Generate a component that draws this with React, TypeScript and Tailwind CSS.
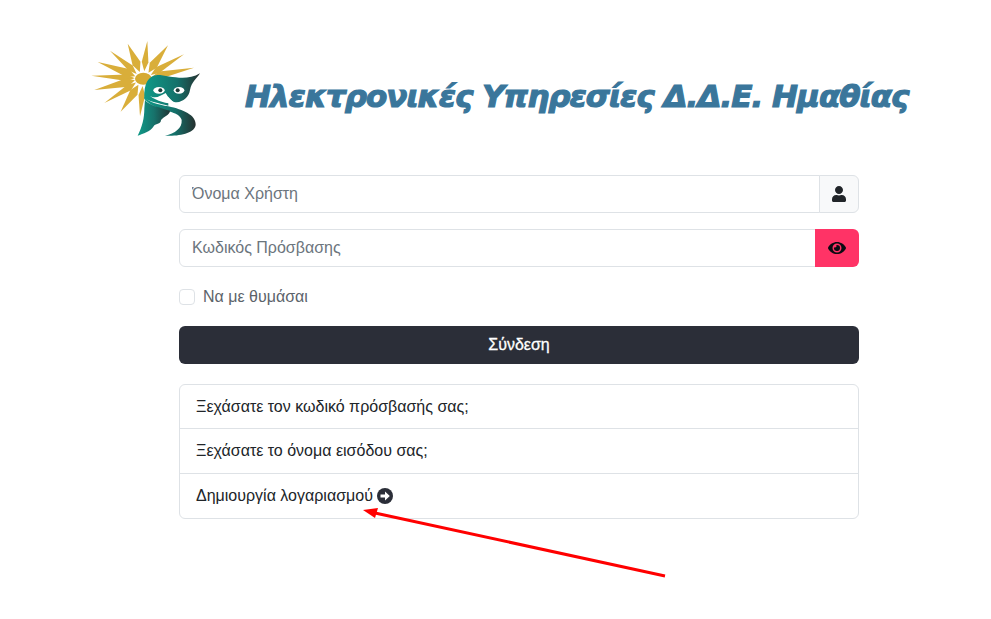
import { FaEye, FaUser } from 'react-icons/fa';

const rays = [
  { tip: [202, 33], w: 10 },
  { tip: [143, 41], w: 13 },
  { tip: [90, 62], w: 10 },
  { tip: [53, 96], w: 13 },
  { tip: [34, 137], w: 10 },
  { tip: [43, 180], w: 13 },
  { tip: [73, 219], w: 10 },
  { tip: [122, 245], w: 13 },
  { tip: [180, 259], w: 10 },
  { tip: [264, 46], w: 13 },
  { tip: [312, 73], w: 10 },
  { tip: [342, 113], w: 11 },
];

const Logo = () => (
  <svg viewBox="0 0 420 345" className="w-[140px] h-[115px] shrink-0">
    <defs>
      <linearGradient id="owl" x1="0" y1="0" x2="1" y2="0">
        <stop offset="0" stopColor="#0f9a88" />
        <stop offset="0.6" stopColor="#14706a" />
        <stop offset="1" stopColor="#26302f" />
      </linearGradient>
      <linearGradient id="wing" x1="0" y1="0" x2="1" y2="0">
        <stop offset="0" stopColor="#0f9a88" />
        <stop offset="0.5" stopColor="#17736c" />
        <stop offset="1" stopColor="#1f3635" />
      </linearGradient>
    </defs>
    {rays.map(({ tip, w }) => {
      const cx = 190;
      const cy = 146;
      const dx = tip[0] - cx;
      const dy = tip[1] - cy;
      const len = Math.hypot(dx, dy);
      const ux = dx / len;
      const uy = dy / len;
      const innerX = cx + ux * 26;
      const innerY = cy + uy * 22;
      const midX = cx + ux * 50;
      const midY = cy + uy * 50;
      return (
        <polygon
          key={tip.join()}
          points={`${tip[0]},${tip[1]} ${midX - uy * w},${midY + ux * w} ${innerX},${innerY} ${midX + uy * w},${midY - ux * w}`}
          fill="#d9ae3a"
        />
      );
    })}
    <ellipse cx="190" cy="146" rx="25" ry="18" fill="#d6aa32" />
    <g transform="translate(165 105)">
      <path
        d="M28 100C26 55 40 32 68 30C100 30 150 52 195 25C185 42 170 50 165 75C162 95 145 110 125 112C115 112 104 104 100 95L100 122C70 115 45 110 28 100Z"
        fill="url(#owl)"
      />
      <ellipse cx="72" cy="76" rx="17" ry="10" fill="#fff" />
      <path d="M44 92C62 104 76 92 92 84C98 96 110 108 122 116C94 116 66 108 44 92Z" fill="#fff" />
      <ellipse cx="132" cy="76" rx="16" ry="10" fill="#fff" />
      <circle cx="76" cy="76" r="6" fill="#1f3b3a" />
      <circle cx="128" cy="76" r="6" fill="#1f3b3a" />
      <path
        d="M28 95C40 112 70 118 100 124C145 134 182 150 182 178C182 205 130 215 90 212C120 205 142 190 140 165C138 146 100 138 75 131C55 124 38 114 28 102Z"
        fill="url(#owl)"
      />
      <path
        d="M30 104C40 120 75 128 105 137C105 150 85 155 78 165C78 178 60 175 55 185C45 200 25 205 8 212C22 185 28 160 28 130Z"
        fill="url(#wing)"
      />
    </g>
  </svg>
);

export default function App() {
  return (
    <div className="relative w-[991px] h-[619px] overflow-hidden bg-white font-['Liberation_Sans',sans-serif] text-[#212529]">
      <header className="flex items-center h-[115px] mt-[30px] ml-[80px]">
        <Logo />
        <h1 className="ml-[25px] mt-[18px] whitespace-nowrap font-['DejaVu_Sans',sans-serif] text-[31px] font-bold italic tracking-[-0.97px] text-[#3a769b] [-webkit-text-stroke:1.2px_#3a769b]">
          Ηλεκτρονικές Υπηρεσίες Δ.Δ.Ε. Ημαθίας
        </h1>
      </header>

      <form className="w-[680px] ml-[179px] mt-[30px]">
        <div className="flex h-[38px]">
          <input
            placeholder="Όνομα Χρήστη"
            className="flex-1 min-w-0 px-3 border border-[#dee2e6] rounded-l-[6px] text-base placeholder:text-[#6c757d] outline-none"
          />
          <div className="flex items-center justify-center w-[40px] -ml-px bg-[#f8f9fa] border border-[#dee2e6] rounded-r-[6px]">
            <FaUser className="w-[14px] h-4 text-[#212529]" />
          </div>
        </div>

        <div className="flex h-[38px] mt-4">
          <input
            placeholder="Κωδικός Πρόσβασης"
            className="flex-1 min-w-0 px-3 border border-[#dee2e6] rounded-l-[6px] text-base placeholder:text-[#6c757d] outline-none"
          />
          <div className="flex items-center justify-center w-[44px] -ml-px bg-[#ff3366] rounded-r-[6px]">
            <FaEye className="w-[18px] h-4 text-[#0b0b12]" />
          </div>
        </div>

        <label className="flex items-center gap-2 h-6 mt-[18px] text-base text-[#5c636a]">
          <span className="w-4 h-4 bg-white border border-[#dee2e6] rounded-[4px]" />
          Να με θυμάσαι
        </label>

        <button
          type="button"
          className="block w-full h-[38px] mt-[17px] bg-[#2b2e38] rounded-[6px] text-base text-white [-webkit-text-stroke:0.3px_#fff]"
        >
          Σύνδεση
        </button>

        <ul className="mt-5 border border-[#dee2e6] rounded-[6px] text-base">
          <li className="h-[44px] px-4 flex items-center border-b border-[#dee2e6]">
            Ξεχάσατε τον κωδικό πρόσβασής σας;
          </li>
          <li className="h-[45px] px-4 flex items-center border-b border-[#dee2e6]">
            Ξεχάσατε το όνομα εισόδου σας;
          </li>
          <li className="h-[44px] px-4 flex items-center gap-[4px]">
            Δημιουργία λογαριασμού
            <svg viewBox="0 0 16 16" className="w-4 h-4">
              <circle cx="8" cy="8" r="8" fill="#2b2e38" />
              <path d="M3.5 6.4H8V3.6L12.8 8 8 12.4V9.6H3.5Z" fill="#fff" />
            </svg>
          </li>
        </ul>
      </form>

      <svg className="absolute left-0 top-0 pointer-events-none" width="991" height="619">
        <line x1="665" y1="576" x2="375" y2="513" stroke="#ff0000" strokeWidth="3" />
        <polygon points="363,510 378,508 375,518" fill="#ff0000" />
      </svg>
    </div>
  );
}
